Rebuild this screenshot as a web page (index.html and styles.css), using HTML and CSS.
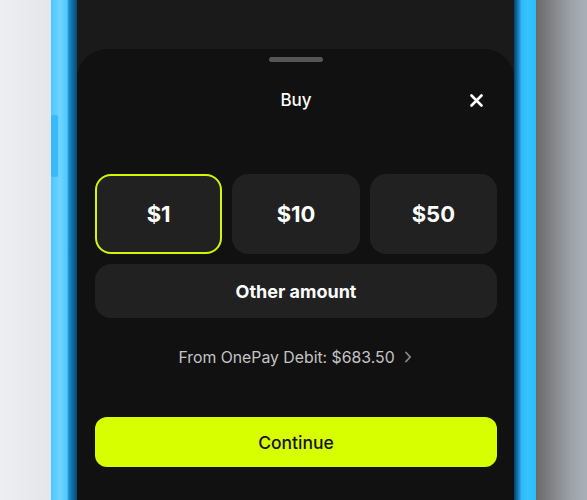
FILE: index.html
```html
<!DOCTYPE html>
<html lang="en">
<head>
<meta charset="utf-8">
<title>Buy</title>
<link rel="stylesheet" href="styles.css">
</head>
<body>
<div class="stage">
  <div class="bg-left"></div>
  <div class="frame-left"><span class="side-btn"></span></div>
  <div class="screen">
    <div class="sheet">
      <div class="handle"></div>
      <div class="header">
        <span></span>
        <h1 class="title">Buy</h1>
        <button class="close" aria-label="Close">
          <svg width="13" height="13" viewBox="0 0 13 13"><path d="M1.5 1.5 L11.5 11.5 M11.5 1.5 L1.5 11.5" stroke="#fff" stroke-width="2.6" stroke-linecap="round" fill="none"/></svg>
        </button>
      </div>
      <div class="amounts">
        <button class="amount selected">$1</button>
        <button class="amount">$10</button>
        <button class="amount">$50</button>
      </div>
      <button class="other">Other amount</button>
      <div class="source">
        <span>From OnePay Debit: $683.50</span>
        <svg width="8" height="12" viewBox="0 0 8 12"><path d="M2 1.5 L6.2 6 L2 10.5" stroke="#8a8a8a" stroke-width="1.8" stroke-linecap="round" stroke-linejoin="round" fill="none"/></svg>
      </div>
      <button class="continue">Continue</button>
    </div>
  </div>
  <div class="frame-right"></div>
  <div class="bg-right"></div>
</div>
</body>
</html>
```

FILE: styles.css
```css
* { box-sizing: border-box; }
html, body { margin: 0; padding: 0; }
body {
  width: 587px;
  height: 500px;
  overflow: hidden;
  font-family: Inter, "Noto Sans", "Liberation Sans", sans-serif;
}
.stage {
  display: flex;
  width: 587px;
  height: 500px;
}
.bg-left {
  width: 51px;
  background: linear-gradient(90deg, #eceef0 0%, #e4e6ea 100%);
}
.frame-left {
  position: relative;
  width: 26px;
  background: linear-gradient(90deg, #4cc6ff 0%, #6fd4ff 35%, #52c8ff 62%, #1b8fd2 68%, #0f6ea6 82%, #094a70 100%);
}
.side-btn {
  position: absolute;
  left: 0;
  top: 115px;
  width: 7px;
  height: 62px;
  background: #38b9fb;
  border-radius: 2px;
}
.screen {
  width: 437px;
  background: #1a1a1a;
  padding-top: 49px;
  display: flex;
  flex-direction: column;
}
.sheet {
  flex: 1;
  background: #111111;
  border-radius: 30px 30px 0 0;
  padding: 8px 17px 0 18px;
  display: flex;
  flex-direction: column;
}
.handle {
  align-self: center;
  width: 54px;
  height: 5px;
  border-radius: 3px;
  background: #555555;
}
.header {
  margin-top: 26px;
  display: grid;
  grid-template-columns: 1fr auto 1fr;
  align-items: center;
  height: 24px;
}
.title {
  margin: 0;
  font-size: 17px;
  font-weight: 500;
  color: #ffffff;
  line-height: 24px;
}
.close {
  justify-self: end;
  margin-right: 14px;
  padding: 0;
  border: 0;
  background: none;
  width: 13px;
  height: 13px;
  display: flex;
}
button {
  font-family: inherit;
  cursor: pointer;
}
.amounts {
  margin-top: 62px;
  display: grid;
  grid-template-columns: repeat(3, 1fr);
  gap: 10px;
}
.amount {
  height: 80px;
  border-radius: 16px;
  border: 2px solid transparent;
  background: #212121;
  color: #ffffff;
  font-size: 22px;
  font-weight: 700;
}
.amount.selected {
  border-color: #d4f700;
}
.other {
  margin-top: 10px;
  height: 54px;
  border: 0;
  border-radius: 16px;
  background: #212121;
  color: #ffffff;
  font-size: 18px;
  font-weight: 700;
}
.source {
  margin-top: 29px;
  height: 20px;
  display: flex;
  align-items: center;
  justify-content: center;
  gap: 9px;
  color: #c4c4c4;
  font-size: 15.8px;
  padding-right: 2px;
}
.continue {
  margin-top: 50px;
  height: 50px;
  border: 0;
  border-radius: 12px;
  background: #d7ff00;
  color: #141414;
  font-size: 17.5px;
  font-weight: 500;
}
.frame-right {
  width: 22px;
  background: linear-gradient(90deg, #083f63 0%, #1580c2 20%, #2fb8f8 34%, #35c3ff 60%, #2ebcf9 100%);
}
.bg-right {
  width: 51px;
  background: linear-gradient(90deg, #6a6a6a 0%, #858688 35%, #9ea3a9 70%, #a9b0b8 100%);
}
```
